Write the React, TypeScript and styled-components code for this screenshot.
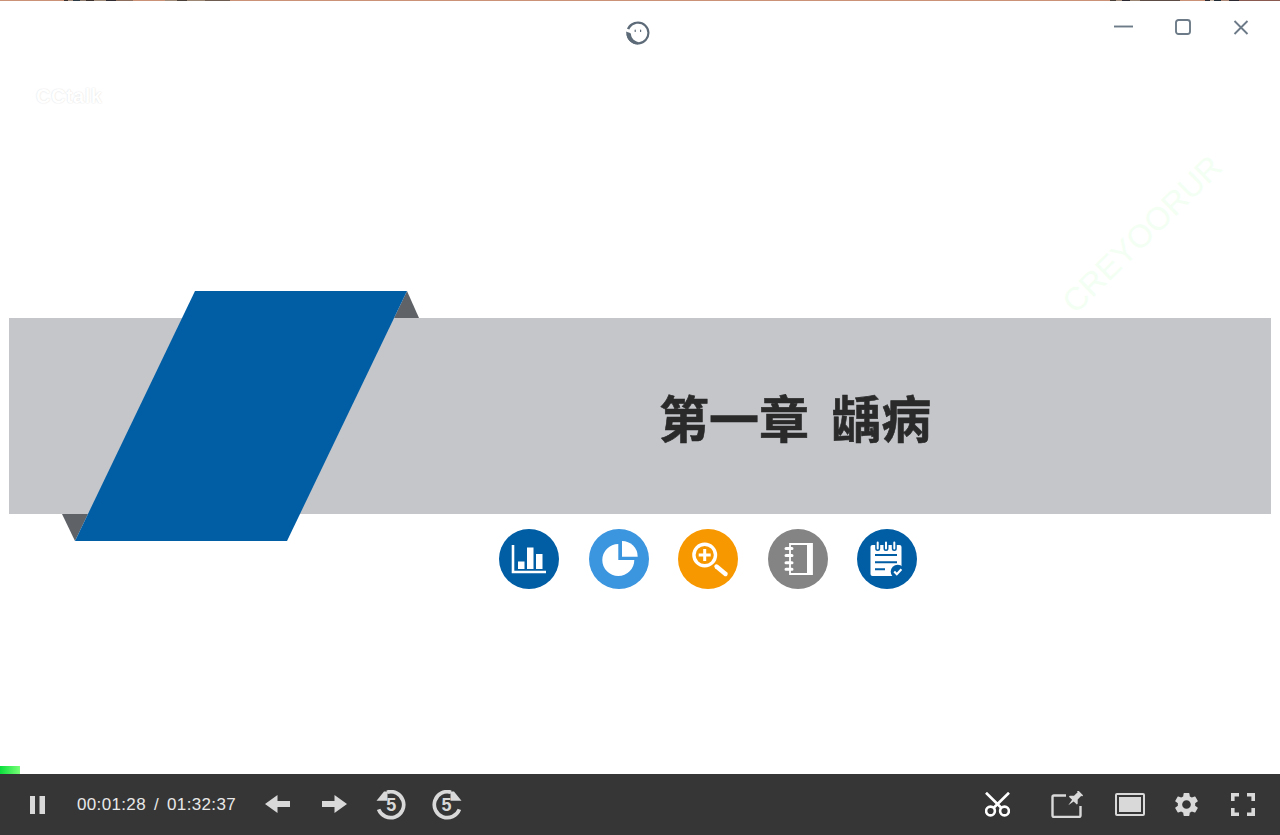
import React from 'react'
import styled, { createGlobalStyle } from 'styled-components'
import { MdSettings } from 'react-icons/md'

const GlobalStyle = createGlobalStyle`
  html, body {
    margin: 0;
    padding: 0;
    background: #fff;
    font-family: 'Liberation Sans', Arial, sans-serif;
  }
`

const Frame = styled.div`
  width: 1280px;
  height: 835px;
  display: flex;
  flex-direction: column;
  overflow: hidden;
  background: #fff;
`

const TopLine = styled.div`
  height: 1px;
  flex: none;
  background:
    linear-gradient(90deg, #3a2f2a 0 4px, #a8917f 4px 9px, #2c3a44 9px 16px, #8d7a6a 16px 22px, #3a2f2a 22px 30px, #a08a78 30px 42px, #2f2a30 42px 52px, #8d6d5c 52px 69px) 64px 0 / 69px 1px no-repeat,
    linear-gradient(90deg, #a08a78 0 12px, #4a4038 12px 22px, #9c8674 22px 40px, #6f5c50 40px 65px) 165px 0 / 65px 1px no-repeat,
    linear-gradient(90deg, #4a4038 0 6px, #a8917f 6px 12px, #2c2a30 12px 20px, #9c8674 20px 30px, #5d4c44 30px 70px) 1110px 0 / 70px 1px no-repeat,
    linear-gradient(90deg, #2c2a30 0 5px, #c9b7a7 5px 9px, #1f2a33 9px 16px, #b08a78 16px 24px, #2c2a30 24px 34px, #8a5a50 34px 75px) 1205px 0 / 75px 1px no-repeat,
    #cb9278;
`

const Slide = styled.main`
  position: relative;
  flex: 1;
  padding: 317px 9px 0;
`

const TitleBar = styled.header`
  position: absolute;
  inset: 0 0 auto 0;
  display: flex;
  align-items: flex-start;
  padding: 18px 31px 0 625px;
`

const Logo = styled.svg`
  display: block;
  width: 25px;
  height: 26px;
  margin-top: 1px;
  filter: blur(0.3px);
`

const WindowControls = styled.div`
  margin-left: auto;
  display: flex;
  gap: 42px;
`

const WindowIcon = styled.svg`
  display: block;
  height: 16px;
  fill: none;
  stroke: #6d7b88;
  stroke-width: 1.9;
`

const Brand = styled.div`
  position: absolute;
  left: 36px;
  top: 84px;
  font-size: 20px;
  line-height: 22px;
  font-weight: 700;
  letter-spacing: 0.5px;
  color: #fff;
  text-shadow: 0 0 1.5px rgba(0, 0, 0, 0.16);
`

const Watermark = styled.div`
  position: absolute;
  left: 1142px;
  top: 233px;
  transform: translate(-50%, -50%) rotate(-44.5deg);
  font-size: 32px;
  line-height: 40px;
  white-space: nowrap;
  color: #f3fff3;
`

const Banner = styled.section`
  position: relative;
  height: 196px;
  display: flex;
  align-items: center;
  padding-left: 650px;
  background: #c4c6ca;
`

const Ribbon = styled.svg`
  position: absolute;
  left: 53px;
  top: -27px;
  width: 358px;
  height: 250px;
`

const Title = styled.h1`
  margin: 0;
  font-family: 'Noto Sans CJK SC', 'Liberation Sans', sans-serif;
  font-size: 50px;
  line-height: 60px;
  font-weight: 700;
  word-spacing: 11px;
  white-space: nowrap;
  color: #2a2a2a;
  -webkit-text-stroke: 0.6px #2a2a2a;
  filter: blur(0.4px);
`

const IconRow = styled.div`
  display: flex;
  gap: 29.5px;
  padding: 15px 0 0 490.3px;
`

const SlideIcon = styled.svg`
  display: block;
  flex: none;
  width: 60px;
  height: 60px;
  filter: blur(0.3px);
`

const Progress = styled.div`
  position: absolute;
  left: 0;
  bottom: 0;
  width: 20px;
  height: 8px;
  background: linear-gradient(90deg, #0ade3c, #78ff78);
`

const Controls = styled.footer`
  flex: none;
  height: 61px;
  display: flex;
  align-items: center;
  justify-content: space-between;
  padding: 0 25px 0 30px;
  background: #363636;
  color: #d9d9d9;
`

const ControlGroup = styled.div`
  display: flex;
  align-items: center;
`

const ControlIcon = styled.svg<{ $gap?: number }>`
  display: block;
  flex: none;
  margin-left: ${(props) => props.$gap ?? 0}px;
  fill: #d9d9d9;
`

const ArrowIcon = styled(ControlIcon)`
  margin-bottom: 2px;
`

const GearWrap = styled.span`
  display: flex;
  margin-left: 27px;
  font-size: 29px;
  color: #d9d9d9;
`

const TimeText = styled.div`
  margin-left: 32px;
  display: flex;
  gap: 8px;
  width: 159px;
  font-size: 17px;
  line-height: 20px;
  letter-spacing: 0.35px;
  white-space: nowrap;
  color: #e8e8e8;
`

function SeekIcon({ forward, gap }: { forward?: boolean; gap: number }) {
  return (
    <ControlIcon $gap={gap} width="30" height="30" viewBox="0 0 30 30">
      <g transform={forward ? 'matrix(-1 0 0 1 30 0)' : undefined}>
        <path
          d="M11 2.2A13 13 0 1 1 2.6 19.4"
          fill="none"
          stroke="#d9d9d9"
          strokeWidth="3.7"
        />
        <path d="M.5 10.8 8 1.5H11.5V10.8Z" />
      </g>
      <text
        x={forward ? 14.5 : 15.2}
        y="21"
        textAnchor="middle"
        fontSize="18"
        fontWeight="700"
        fontFamily="'Liberation Sans', sans-serif"
        fill="#d9d9d9"
      >
        5
      </text>
    </ControlIcon>
  )
}

export default function App() {
  return (
    <Frame>
      <GlobalStyle />
      <TopLine />
      <Slide>
        <TitleBar>
          <Logo viewBox="0 0 25 26">
            <path
              d="M13 1.5a11.5 11.5 0 1 1-11.4 13l2.4-.4a9.2 9.2 0 1 0 9-10.3c-3.8 0-7.2 2.3-8.6 5.8l-2.4-.9C3.6 4.6 8 1.5 13 1.5Z"
              fill="#5d6b78"
            />
            <path
              d="M1.2 11.6c2.6 1.3 4.6.8 4.8 2.8.4 3.8 3.4 6.8 7.6 7.6L13 24.5C6 24.6.8 18.6 1.2 11.6Z"
              fill="#5d6b78"
            />
            <rect x="9.6" y="9.5" width="1.2" height="2.6" rx="0.6" fill="#5d6b78" />
            <rect x="15" y="9.5" width="1.2" height="2.6" rx="0.6" fill="#5d6b78" />
          </Logo>
          <WindowControls>
            <WindowIcon width="19" viewBox="0 0 19 16">
              <path d="M0 7.5h19" />
            </WindowIcon>
            <WindowIcon width="16" viewBox="0 0 16 16">
              <rect x="1" y="1" width="14" height="14" rx="2.5" />
            </WindowIcon>
            <WindowIcon width="16" viewBox="0 0 16 16">
              <path d="M1.5 2l13 13M14.5 2l-13 13" />
            </WindowIcon>
          </WindowControls>
        </TitleBar>
        <Brand>CCtalk</Brand>
        <Watermark>CREYOORUR</Watermark>
        <Banner>
          <Ribbon viewBox="0 0 358 250">
            <polygon points="345,0 357,27 332,27" fill="#5f6368" />
            <polygon points="0,223 26,223 13,250" fill="#5f6368" />
            <polygon points="133,0 345,0 225,250 13,250" fill="#015ea5" />
          </Ribbon>
          <Title>第一章 龋病</Title>
        </Banner>
        <IconRow>
          <SlideIcon viewBox="0 0 60 60">
            <circle cx="30" cy="30" r="30" fill="#015ea5" />
            <path d="M14 16v27h33" fill="none" stroke="#fff" strokeWidth="2.6" />
            <rect x="19" y="32.5" width="6.5" height="7.5" fill="#fff" />
            <rect x="28" y="18.5" width="6.5" height="21.5" fill="#fff" />
            <rect x="37" y="25" width="6.5" height="15" fill="#fff" />
          </SlideIcon>
          <SlideIcon viewBox="0 0 60 60">
            <circle cx="30" cy="30" r="30" fill="#3b95df" />
            <path d="M29.3 31V15a16 16 0 1 0 16 16Z" fill="#fff" />
            <path d="M33 12v15.7h15.7A15.7 15.7 0 0 0 33 12Z" fill="#fff" />
          </SlideIcon>
          <SlideIcon viewBox="0 0 60 60">
            <circle cx="30" cy="30" r="30" fill="#f89800" />
            <circle cx="26.7" cy="26" r="10.8" fill="none" stroke="#fff" strokeWidth="3.4" />
            <path d="M26.7 20v12M20.7 26h12" stroke="#fff" strokeWidth="3" />
            <path d="M38.5 37.5l9 7.5" stroke="#fff" strokeWidth="4.4" strokeLinecap="round" />
          </SlideIcon>
          <SlideIcon viewBox="0 0 60 60">
            <circle cx="30" cy="30" r="30" fill="#848484" />
            <path d="M22 15h22v30H22z" fill="none" stroke="#fff" strokeWidth="1.8" />
            <rect x="39" y="15" width="4.8" height="30" fill="#fff" />
            <g stroke="#fff" strokeWidth="3" strokeLinecap="round" fill="none">
              <path d="M18 19.5h6M18 26.5h6M18 33.7h6M18 40.3h6" />
            </g>
          </SlideIcon>
          <SlideIcon viewBox="0 0 60 60">
            <circle cx="30" cy="30" r="30" fill="#015ea5" />
            <rect x="13.5" y="16" width="31" height="31" rx="2" fill="#fff" />
            <path d="M20.7 13.5v6M29 13.5v6M37.3 13.5v6" stroke="#015ea5" strokeWidth="5" strokeLinecap="round" />
            <path d="M20.7 13.5v6M29 13.5v6M37.3 13.5v6" stroke="#fff" strokeWidth="2" strokeLinecap="round" />
            <path d="M18 26h22M18 33.3h22M18 40.3h10" stroke="#015ea5" strokeWidth="2" />
            <circle cx="40.7" cy="42.7" r="7" fill="#015ea5" />
            <path d="M37.2 42.5l2.6 2.7 4.6-5" fill="none" stroke="#fff" strokeWidth="2.2" />
          </SlideIcon>
        </IconRow>
        <Progress />
      </Slide>
      <Controls>
        <ControlGroup>
          <ControlIcon width="15" height="18" viewBox="0 0 15 18">
            <rect x="0" y="0" width="5" height="18" />
            <rect x="9.5" y="0" width="5.5" height="18" />
          </ControlIcon>
          <TimeText>
            <span>00:01:28</span>
            <span>/</span>
            <span>01:32:37</span>
          </TimeText>
          <ArrowIcon $gap={29} width="25" height="18" viewBox="0 0 25 18">
            <path d="M0 9 12.5 0V6H25V12H12.5V18Z" />
          </ArrowIcon>
          <ArrowIcon $gap={32} width="25" height="18" viewBox="0 0 25 18">
            <path d="M25 9 12.5 0V6H0V12H12.5V18Z" />
          </ArrowIcon>
          <SeekIcon gap={29} />
          <SeekIcon gap={26} forward />
        </ControlGroup>
        <ControlGroup>
          <ControlIcon width="25" height="25" viewBox="0 0 25 25" style={{ fill: 'none' }}>
            <g stroke="#fff" strokeWidth="2.6" fill="none">
              <circle cx="5.5" cy="19" r="4.4" />
              <circle cx="19.5" cy="19" r="4.4" />
              <path d="M1 .7 16.5 16M24 .7 8.5 16" />
            </g>
          </ControlIcon>
          <ControlIcon $gap={41} width="32" height="27" viewBox="0 0 32 27">
            <path
              d="M15 4.5H3a1.5 1.5 0 0 0-1.5 1.5V24.5a1.5 1.5 0 0 0 1.5 1.5H28a1.5 1.5 0 0 0 1.5-1.5V15"
              fill="none"
              stroke="#d9d9d9"
              strokeWidth="2.4"
            />
            <g transform="translate(24 7.5) rotate(45)">
              <path d="M-3.5-8H3.5V-6.4H2.6V-1.2L5.6 1.8V3H1.1L0 9.5-1.1 3H-5.6V1.8L-2.6-1.2V-6.4H-3.5Z" />
            </g>
          </ControlIcon>
          <ControlIcon $gap={32} width="30" height="23" viewBox="0 0 30 23">
            <rect x="1" y="1" width="28" height="21" rx="1" fill="none" stroke="#d9d9d9" strokeWidth="2" />
            <rect x="4" y="4" width="22" height="15" />
          </ControlIcon>
          <GearWrap>
            <MdSettings />
          </GearWrap>
          <ControlIcon $gap={30} width="24" height="23" viewBox="0 0 24 23">
            <path
              d="M1.8 8V1.8H8M16 1.8H22.2V8M22.2 15V21.2H16M8 21.2H1.8V15"
              fill="none"
              stroke="#d9d9d9"
              strokeWidth="3.6"
            />
          </ControlIcon>
        </ControlGroup>
      </Controls>
    </Frame>
  )
}
